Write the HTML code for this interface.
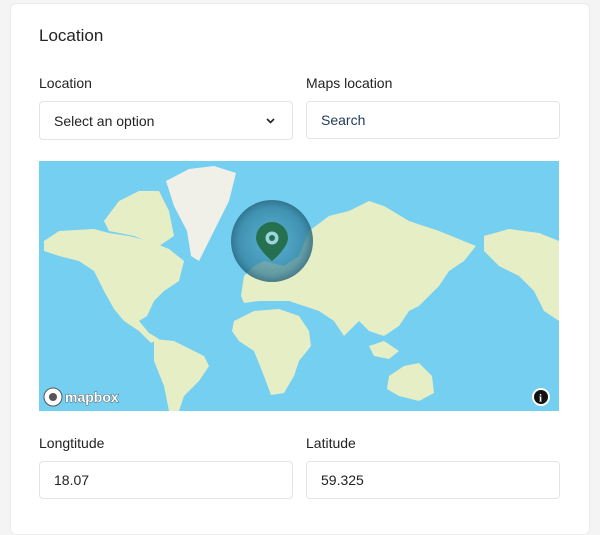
<!DOCTYPE html>
<html><head><style>
body{margin:0;width:600px;height:517px;background:#f4f4f4;font-family:"Liberation Sans",sans-serif;overflow:hidden}
.card{position:absolute;left:10px;top:3px;width:578px;height:530px;background:#fff;border:1px solid #ececec;border-radius:6px}
.h{position:absolute;left:39px;top:26px;font-size:17px;color:#222}
.lab{position:absolute;font-size:14px;color:#222}
.inp{position:absolute;height:37px;border:1px solid #e4e4e4;border-radius:4px;background:#fff;font-size:14px;line-height:37px;padding-left:14px;box-sizing:border-box;color:#222}
.map{position:absolute;left:39px;top:161px;width:520px;height:250px;background:#75cff0;overflow:hidden}
</style></head><body>
<div class="card"></div>
<div class="h">Location</div>
<div class="lab" style="left:39px;top:75px">Location</div>
<div class="lab" style="left:306px;top:75px">Maps location</div>
<div class="inp" style="left:39px;top:101px;width:254px;height:39px;line-height:39px">Select an option<svg style="position:absolute;right:17px;top:16px" width="9" height="6" viewBox="0 0 9 6"><path d="M1 1 L4.5 4.5 L8 1" stroke="#222" stroke-width="1.6" fill="none"/></svg></div>
<div class="inp" style="left:306px;top:101px;width:254px;height:38px;color:#1f3a5a">Search</div>
<div class="map">
<svg width="520" height="250" viewBox="0 0 520 250">
<defs><radialGradient id="g" cx=".5" cy=".5" r=".5"><stop offset="0" stop-color="#3a8fb0" stop-opacity=".5"/><stop offset=".8" stop-color="#2b7896" stop-opacity=".7"/><stop offset="1" stop-color="#1f5f7a" stop-opacity=".8"/></radialGradient></defs>
<g fill="#e6eec6">
<path d="M5 80 L20 70 L55 68 L70 72 L90 75 L110 80 L130 88 L145 100 L140 120 L125 130 L115 140 L108 155 L100 160 L110 172 L120 178 L112 182 L100 170 L85 160 L75 148 L65 130 L55 110 L40 100 L20 95 L5 90Z"/>
<path d="M65 60 L80 40 L100 30 L120 30 L130 50 L135 75 L120 85 L95 75 L70 70Z"/>
<path d="M115 178 L135 180 L165 195 L170 205 L160 220 L145 235 L140 250 L130 250 L125 225 L115 200Z"/>
<path d="M202 135 L205 115 L215 105 L225 100 L245 105 L260 95 L270 70 L290 55 L310 50 L330 40 L345 45 L370 60 L400 70 L437 85 L425 100 L410 110 L400 125 L390 135 L380 145 L370 150 L360 165 L345 175 L330 170 L320 160 L305 175 L295 160 L280 150 L265 145 L250 140 L235 140 L220 140 L205 142Z"/>
<path d="M195 160 L215 150 L240 148 L260 155 L270 170 L272 185 L260 200 L255 215 L245 232 L232 234 L225 215 L215 190 L200 180 L193 170Z"/>
<path d="M350 215 L365 205 L380 202 L393 215 L395 232 L380 240 L360 235 L348 228Z"/>
<path d="M445 75 L470 68 L500 72 L520 80 L520 160 L505 150 L495 130 L480 115 L460 105 L445 90Z"/>
<path d="M330 185 L345 180 L360 190 L350 198 L335 195Z"/>
</g>
<path d="M127 20 L150 8 L175 5 L197 12 L190 40 L180 60 L170 80 L160 100 L152 95 L148 70 L135 45Z" fill="#f0efe8"/>
<circle cx="233" cy="80" r="41" fill="url(#g)"/>
<path d="M233 61 a16 16 0 0 1 16 16 c0 10 -16 23 -16 23 c0 0 -16 -13 -16 -23 a16 16 0 0 1 16 -16z" fill="#25704f"/>
<circle cx="233" cy="77" r="6.5" fill="#9fd3df"/><circle cx="233" cy="77" r="3" fill="#25704f"/>
<circle cx="14" cy="236" r="9" fill="#fff" stroke="#555" stroke-width="1"/><circle cx="14" cy="236" r="4" fill="#555"/>
<text x="26" y="241" font-family="Liberation Sans" font-weight="bold" font-size="14" fill="#fff" stroke="#444" stroke-width=".8" paint-order="stroke">mapbox</text>
<circle cx="502" cy="236" r="9" fill="#fff"/><circle cx="502" cy="236" r="7" fill="#111"/><text x="500" y="240.5" font-size="11" font-weight="bold" fill="#fff" font-family="Liberation Serif">i</text>
</svg>
</div>
<div class="lab" style="left:39px;top:435px">Longtitude</div>
<div class="lab" style="left:306px;top:435px">Latitude</div>
<div class="inp" style="left:39px;top:461px;width:254px;height:38px">18.07</div>
<div class="inp" style="left:306px;top:461px;width:254px;height:38px">59.325</div>
</body></html>
